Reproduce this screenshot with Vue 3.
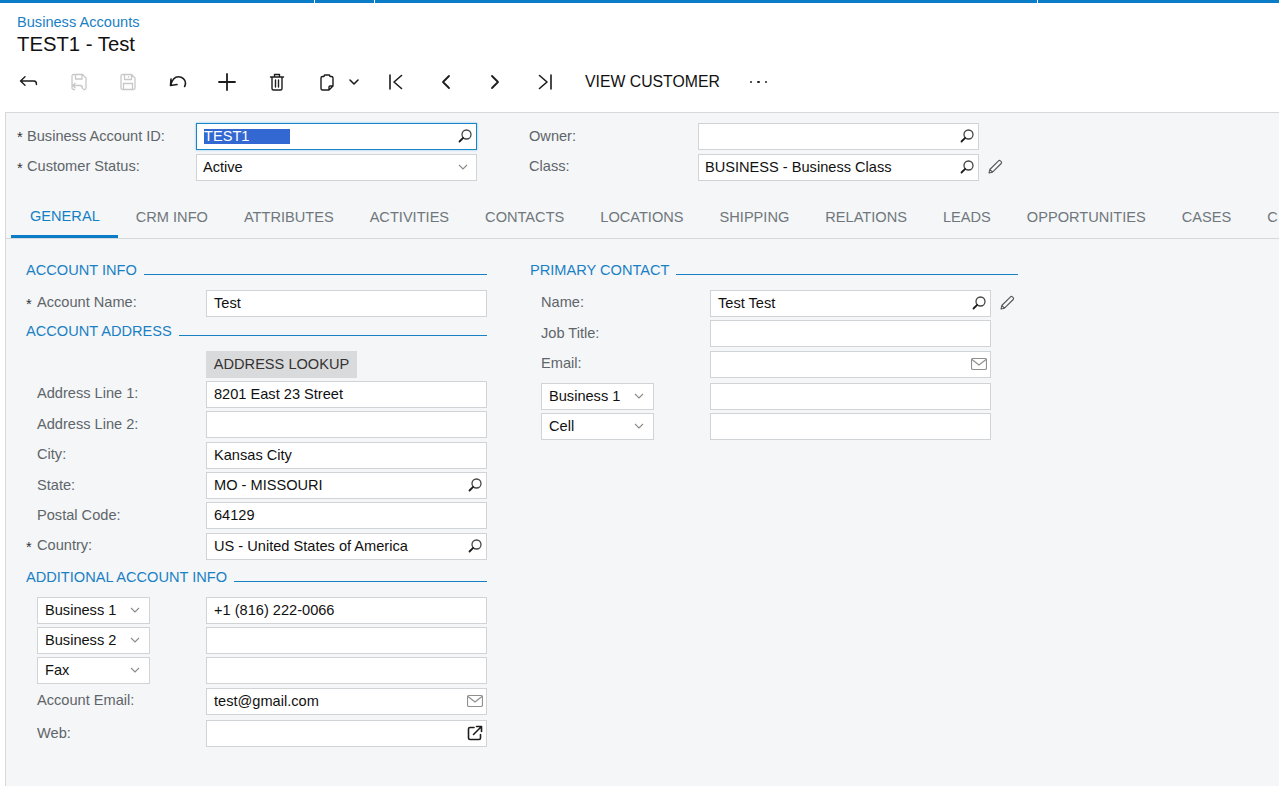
<script setup>
const tabs = ['GENERAL','CRM INFO','ATTRIBUTES','ACTIVITIES','CONTACTS','LOCATIONS','SHIPPING','RELATIONS','LEADS','OPPORTUNITIES','CASES','C']
</script>

<template>
  <div class="page">
    <div class="topbar">
      <div class="seg s1"></div><div class="seg s2"></div><div class="seg s3"></div><div class="seg s4"></div>
    </div>
    <div class="head">
      <div class="crumb">Business Accounts</div>
      <div class="title">TEST1 - Test</div>
    </div>
    <div class="toolbar">
      <div class="btn"><svg width="20" height="20" viewBox="0 0 20 20"><path d="M1.500 9h13.500c1.700 0 2.500 1 2.500 3.500M1.500 9l4.500-4.200M1.500 9l4.500 4.200" class="ic"/></svg></div>
      <div class="btn"><svg width="20" height="20" viewBox="0 0 20 20" class="dis"><path d="M6 17.500H4.500A1.500 1.500 0 0 1 3 16V4a1.500 1.500 0 0 1 1.500-1.500h9L17 6v10a1.500 1.500 0 0 1-1.500 1.500H14M6.500 2.500v4.500h6.500V2.500M3.500 13.500h8c1.500 0 2 1 2 3.500M3.500 13.500l3-2.500M3.500 13.500l3 2.500"/></svg></div>
      <div class="btn"><svg width="20" height="20" viewBox="0 0 20 20" class="dis"><path d="M4.500 2.500h9L17 6v10a1.500 1.500 0 0 1-1.500 1.500h-11A1.500 1.500 0 0 1 3 16V4a1.500 1.500 0 0 1 1.500-1.500zM6.500 2.500v5h7v-5M5.500 17.500v-6h9v6M10.500 4v1.500"/></svg></div>
      <div class="btn"><svg width="20" height="20" viewBox="0 0 20 20"><path d="M2.500 13.500L3 7M2.500 13.500l6.500-1M2.500 13.500C4 8 7 4.800 10.500 4.800c3.700 0 7 2.800 7 6.200 0 1.300-.3 2.400-.9 3.500" class="ic w16"/></svg></div>
      <div class="btn"><svg width="20" height="20" viewBox="0 0 20 20"><path d="M10 2v16M2 10h16" class="ic w2"/></svg></div>
      <div class="btn"><svg width="20" height="20" viewBox="0 0 20 20"><path d="M3.500 5h13M7.500 5V2.500h5V5M5 5v11.500A1.500 1.500 0 0 0 6.500 18h7a1.500 1.500 0 0 0 1.500-1.500V5M8.500 8v7M11.500 8v7" class="ic"/></svg></div>
      <div class="btn clip">
        <svg width="20" height="20" viewBox="0 0 20 20"><path d="M7 4.500H5.500A1.500 1.500 0 0 0 4 6v10.500A1.500 1.500 0 0 0 5.500 18H12l4-4V6a1.500 1.500 0 0 0-1.500-1.500H13L12.500 3h-5zM12 18v-3a1 1 0 0 1 1-1h3" class="ic"/></svg>
        <svg width="12" height="12" viewBox="0 0 12 12" class="clipchev"><path d="M2 4l4 4 4-4" class="ic w16"/></svg>
      </div>
      <div class="btn"><svg width="20" height="20" viewBox="0 0 20 20"><path d="M4 3v14M15.500 3.500L8 10l7.500 6.500" class="ic w16"/></svg></div>
      <div class="btn"><svg width="20" height="20" viewBox="0 0 20 20"><path d="M13 4l-6 6 6 6" class="ic w2"/></svg></div>
      <div class="btn"><svg width="20" height="20" viewBox="0 0 20 20"><path d="M7 4l6 6-6 6" class="ic w2"/></svg></div>
      <div class="btn"><svg width="20" height="20" viewBox="0 0 20 20"><path d="M16 3v14M4.500 3.500L12 10l-7.500 6.500" class="ic w16"/></svg></div>
      <div class="view">VIEW CUSTOMER</div>
      <div class="dots"><i></i><i></i><i></i></div>
    </div>

    <div class="panel">
      <div class="summary">
        <div class="col">
          <div class="row">
            <span class="star">*</span><span class="lab lh">Business Account ID:</span>
            <div class="field focus"><span class="sel">TEST1</span>
              <svg class="fi" width="16" height="16" viewBox="0 0 16 16"><circle cx="9.500" cy="6.500" r="4.500" class="ic thin"/><path d="M6.200 9.800L2.500 13.500" class="ic w2"/></svg></div>
          </div>
          <div class="row gap4">
            <span class="star">*</span><span class="lab">Customer Status:</span>
            <div class="field"><span class="v">Active</span>
              <svg class="fi chev" width="12" height="12" viewBox="0 0 12 12"><path d="M2 4l4 4 4-4" class="ch"/></svg></div>
          </div>
        </div>
        <div class="col c2">
          <div class="row">
            <span class="lab lh">Owner:</span>
            <div class="field"><svg class="fi" width="16" height="16" viewBox="0 0 16 16"><circle cx="9.500" cy="6.500" r="4.500" class="ic thin"/><path d="M6.200 9.800L2.500 13.500" class="ic w2"/></svg></div>
          </div>
          <div class="row gap4">
            <span class="lab">Class:</span>
            <div class="field"><span class="v">BUSINESS - Business Class</span>
              <svg class="fi" width="16" height="16" viewBox="0 0 16 16"><circle cx="9.500" cy="6.500" r="4.500" class="ic thin"/><path d="M6.200 9.800L2.500 13.500" class="ic w2"/></svg></div>
            <svg class="pen" width="16" height="16" viewBox="0 0 16 16"><path d="M2 14l.8-3.500L11.500 1.800a1.300 1.300 0 0 1 1.800 0l.9.900a1.300 1.300 0 0 1 0 1.800L5.500 13.200zM2.800 10.500l2.700 2.700" class="pe"/></svg>
          </div>
        </div>
      </div>

      <div class="tabs">
        <div v-for="(t,i) in tabs" :key="t" class="tab" :class="{active:i===0}">{{ t }}</div>
      </div>

      <div class="body">
        <div class="left">
          <div class="sec"><span>ACCOUNT INFO</span><i></i></div>
          <div class="row r1"><span class="star">*</span><span class="lab">Account Name:</span><div class="field"><span class="v">Test</span></div></div>
          <div class="sec s2nd"><span>ACCOUNT ADDRESS</span><i></i></div>
          <div class="row r2"><span class="star"></span><span class="lab"></span><div class="lookup">ADDRESS LOOKUP</div></div>
          <div class="row g3"><span class="star"></span><span class="lab">Address Line 1:</span><div class="field"><span class="v">8201 East 23 Street</span></div></div>
          <div class="row g3"><span class="star"></span><span class="lab lh">Address Line 2:</span><div class="field"></div></div>
          <div class="row gap4"><span class="star"></span><span class="lab">City:</span><div class="field"><span class="v">Kansas City</span></div></div>
          <div class="row g3"><span class="star"></span><span class="lab lh">State:</span><div class="field"><span class="v">MO - MISSOURI</span>
            <svg class="fi" width="16" height="16" viewBox="0 0 16 16"><circle cx="9.500" cy="6.500" r="4.500" class="ic thin"/><path d="M6.200 9.800L2.500 13.500" class="ic w2"/></svg></div></div>
          <div class="row g3"><span class="star"></span><span class="lab lh">Postal Code:</span><div class="field"><span class="v">64129</span></div></div>
          <div class="row gap4"><span class="star">*</span><span class="lab">Country:</span><div class="field"><span class="v">US - United States of America</span>
            <svg class="fi" width="16" height="16" viewBox="0 0 16 16"><circle cx="9.500" cy="6.500" r="4.500" class="ic thin"/><path d="M6.200 9.800L2.500 13.500" class="ic w2"/></svg></div></div>
          <div class="sec s3rd"><span>ADDITIONAL ACCOUNT INFO</span><i></i></div>
          <div class="row r3"><span class="star"></span><div class="pick"><span>Business 1</span><svg width="12" height="12" viewBox="0 0 12 12"><path d="M2 4l4 4 4-4" class="ch"/></svg></div><div class="field"><span class="v">+1 (816) 222-0066</span></div></div>
          <div class="row g3"><span class="star"></span><div class="pick"><span>Business 2</span><svg width="12" height="12" viewBox="0 0 12 12"><path d="M2 4l4 4 4-4" class="ch"/></svg></div><div class="field"></div></div>
          <div class="row g3"><span class="star"></span><div class="pick"><span>Fax</span><svg width="12" height="12" viewBox="0 0 12 12"><path d="M2 4l4 4 4-4" class="ch"/></svg></div><div class="field"></div></div>
          <div class="row gap4"><span class="star"></span><span class="lab">Account Email:</span><div class="field"><span class="v">test@gmail.com</span>
            <svg class="fi mail" width="16" height="14" viewBox="0 0 16 14"><rect x=".500" y="1.500" width="15" height="11" rx="1.500" class="ma"/><path d="M1 2.500l7 5.500 7-5.500" class="ma"/></svg></div></div>
          <div class="row g5"><span class="star"></span><span class="lab lh">Web:</span><div class="field">
            <svg class="fi ext" width="16" height="16" viewBox="0 0 16 16"><path d="M7 2.500H3A1.500 1.500 0 0 0 1.500 4v9A1.500 1.500 0 0 0 3 14.500h9a1.500 1.500 0 0 0 1.500-1.500V9.500M6.500 9.500L14.500 1.500M9.500 1.500h5v5" class="ic w16"/></svg></div></div>
        </div>
        <div class="right">
          <div class="sec"><span>PRIMARY CONTACT</span><i></i></div>
          <div class="row r1"><span class="star"></span><span class="lab">Name:</span><div class="field"><span class="v">Test Test</span>
            <svg class="fi" width="16" height="16" viewBox="0 0 16 16"><circle cx="9.500" cy="6.500" r="4.500" class="ic thin"/><path d="M6.200 9.800L2.500 13.500" class="ic w2"/></svg></div>
            <svg class="pen" width="16" height="16" viewBox="0 0 16 16"><path d="M2 14l.8-3.500L11.500 1.800a1.300 1.300 0 0 1 1.800 0l.9.900a1.300 1.300 0 0 1 0 1.800L5.500 13.200zM2.800 10.500l2.700 2.700" class="pe"/></svg></div>
          <div class="row g3"><span class="star"></span><span class="lab lh">Job Title:</span><div class="field"></div></div>
          <div class="row gap4"><span class="star"></span><span class="lab">Email:</span><div class="field">
            <svg class="fi mail" width="16" height="14" viewBox="0 0 16 14"><rect x=".500" y="1.500" width="15" height="11" rx="1.500" class="ma"/><path d="M1 2.500l7 5.500 7-5.500" class="ma"/></svg></div></div>
          <div class="row g5"><span class="star"></span><div class="pick"><span>Business 1</span><svg width="12" height="12" viewBox="0 0 12 12"><path d="M2 4l4 4 4-4" class="ch"/></svg></div><div class="field"></div></div>
          <div class="row g3"><span class="star"></span><div class="pick"><span>Cell</span><svg width="12" height="12" viewBox="0 0 12 12"><path d="M2 4l4 4 4-4" class="ch"/></svg></div><div class="field"></div></div>
        </div>
      </div>
    </div>
  </div>
</template>

<style>
html, body { margin: 0; background: #fff; overflow: hidden; }
</style>

<style scoped>
.page { width: 1279px; height: 786px; display: flex; flex-direction: column; overflow: hidden; font-family: "Liberation Sans", Arial, sans-serif; font-size: 14.600px; color: #111; background: #fff; }
.topbar { display: flex; height: 3px; flex: none; gap: 1px; }
.seg { background: #0b7cc6; }
.s1 { width: 314px; } .s2 { width: 59px; } .s3 { width: 662px; } .s4 { flex: 1; }
.head { padding: 11px 0 0 17px; flex: none; }
.crumb { color: #1a80c4; line-height: 16px; }
.title { font-size: 20.300px; line-height: 28px; color: #111; }
.toolbar { display: flex; align-items: center; height: 40px; margin: 4px 0 0 4.500px; flex: none; }
.btn { width: 49.500px; display: flex; justify-content: center; align-items: center; flex: none; }
.clip { width: 70px; justify-content: flex-start; padding-left: 15px; box-sizing: border-box; }
.clipchev { margin-left: 11px; }
.view { font-size: 15.800px; margin-left: 15.500px; color: #111; }
.dots { display: flex; gap: 5px; margin-left: 30px; }
.dots i { width: 2.500px; height: 2.500px; background: #222; border-radius: 50%; }
svg { flex: none; }
.ic { fill: none; stroke: #1c1c1c; stroke-width: 1.400; stroke-linecap: round; stroke-linejoin: round; }
.w16 { stroke-width: 1.600; }
.w2 { stroke-width: 1.800; }
.thin { stroke-width: 1.300; stroke: #444; }
.dis path { fill: none; stroke: #c8c8c8; stroke-width: 1.300; }
.ch { fill: none; stroke: #8a8a8a; stroke-width: 1.100; }
.ma { fill: none; stroke: #8f8f8f; stroke-width: 1.200; }
.pe { fill: none; stroke: #555; stroke-width: 1.100; stroke-linejoin: round; }

.panel { flex: 1; margin-left: 5px; margin-top: 10px; border-top: 1px solid #d6d9dc; border-left: 1px solid #d6d9dc; background: #f4f6f8; min-height: 0; }
.summary { display: flex; padding: 10px 0 0 11px; height: 69px; box-sizing: content-box; }
.col { width: 512px; flex: none; }
.row { display: flex; align-items: flex-start; height: 27px; }
.gap4 { margin-top: 4px; }
.g3 { margin-top: 3px; }
.g5 { margin-top: 5px; }
.star { width: 10px; flex: none; line-height: 27px; color: #333; margin-top: 1px; }
.lab { width: 169px; flex: none; line-height: 25px; color: #5f6569; }
.lh { line-height: 27px; }
.field { width: 281px; height: 27px; box-sizing: border-box; border: 1px solid #d1d4d7; background: #fff; display: flex; align-items: center; flex: none; padding: 0 3px 1px 7px; }
.summary .field { padding-left: 6px; }
.v { color: #111; white-space: nowrap; }
.fi { margin-left: auto; }
.chev { margin-right: 4px; }
.summary .focus { border-color: #1a85c9; box-shadow: 0 0 2px #7fc0ea; padding-left: 7px; }
.sel { background: #3367d1; color: #fff; width: 86px; height: 15px; line-height: 15px; display: block; }
.pen { margin: 5px 0 0 8px; }

.tabs { display: flex; height: 47px; padding-left: 5px; border-bottom: 1px solid #d6d9dc; overflow: hidden; box-sizing: border-box; }
.tab { padding: 0 18px; line-height: 51px; font-size: 14.600px; color: #70767b; white-space: nowrap; flex: none; height: 46px; box-sizing: border-box; }
.tab:last-child { padding-right: 0; }
.active { color: #1380c4; line-height: 49px; border-bottom: 3px solid #0b7cc6; padding-left: 19px; }

.body { display: flex; padding: 21px 0 0 20px; }
.left { width: 504px; flex: none; }
.right { width: 492px; flex: none; }
.sec { display: flex; align-items: center; height: 20px; color: #1a80c4; width: 461px; }
.right .sec { width: 488px; }
.sec span { white-space: nowrap; }
.sec i { flex: 1; height: 1px; background: #1a80c4; margin: 9px 0 0 7px; }
.r1 { margin-top: 10px; }
.right .row { padding-left: 1px; }
.s2nd { margin-top: 4px; }
.r2 { margin-top: 10px; }
.s3rd { margin-top: 7px; }
.r3 { margin-top: 10px; }
.lookup { background: #d9dadb; height: 27px; width: 151px; line-height: 27px; text-align: center; color: #333; }
.pick { width: 113px; height: 27px; box-sizing: border-box; border: 1px solid #d1d4d7; background: #fff; display: flex; align-items: center; justify-content: space-between; padding: 0 8px 1px 7px; margin-right: 56px; flex: none; }
.left .star { width: 11px; }
</style>
